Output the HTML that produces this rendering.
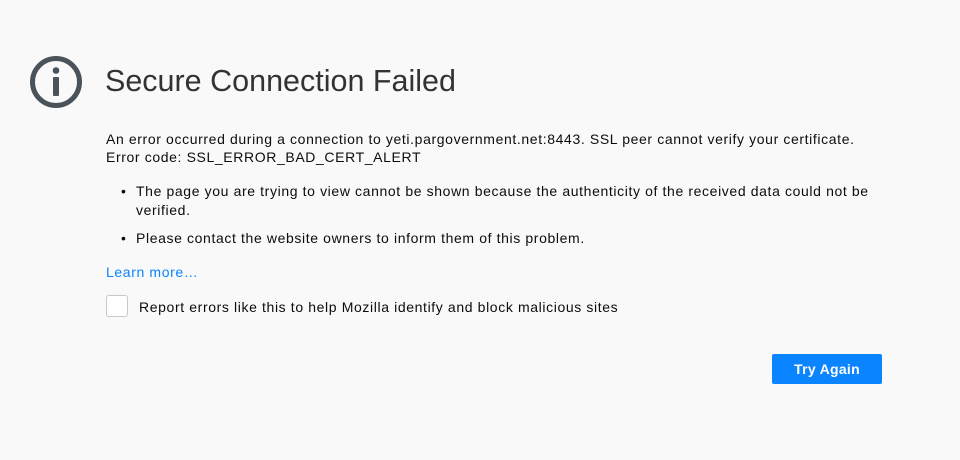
<!DOCTYPE html>
<html><head><style>
body{margin:0;width:960px;height:460px;background:#f9f9fa;font-family:"Liberation Sans",sans-serif;color:#0c0c0d;position:relative;overflow:hidden}
.a{position:absolute;white-space:nowrap}
.t{font-size:14px;line-height:18px;letter-spacing:0.62px}
</style></head><body>
<svg class="a" style="left:28px;top:54px" width="56" height="56" viewBox="0 0 56 56">
<circle cx="28" cy="28" r="23.5" fill="none" stroke="#4a525a" stroke-width="5"/>
<circle cx="28" cy="16.5" r="3.3" fill="#4a525a"/>
<rect x="25" y="23" width="6" height="19" rx="1" fill="#4a525a"/>
</svg>
<div class="a" style="left:105px;top:61px;font-size:30.5px;line-height:40px;color:#333;font-weight:300">Secure Connection Failed</div>
<div class="a t" style="left:106px;top:130px">An error occurred during a connection to yeti.pargovernment.net:8443. SSL peer cannot verify your certificate.</div>
<div class="a t" style="left:106px;top:148px">Error code: SSL_ERROR_BAD_CERT_ALERT</div>
<div class="a t" style="left:121px;top:182px">•</div>
<div class="a t" style="left:136px;top:182px">The page you are trying to view cannot be shown because the authenticity of the received data could not be</div>
<div class="a t" style="left:136px;top:201px">verified.</div>
<div class="a t" style="left:121px;top:229px">•</div>
<div class="a t" style="left:136px;top:229px">Please contact the website owners to inform them of this problem.</div>
<div class="a t" style="left:106px;top:263px;color:#0a84ff">Learn more…</div>
<div class="a" style="left:106px;top:295px;width:20px;height:20px;border:1px solid #c8c8ca;border-radius:3px;background:#fff"></div>
<div class="a t" style="left:139px;top:298px">Report errors like this to help Mozilla identify and block malicious sites</div>
<div class="a" style="left:772px;top:354px;width:110px;height:30px;background:#0a84ff;border-radius:2px;color:#fff;font-size:14px;line-height:30px;text-align:center;font-weight:bold;letter-spacing:0.3px">Try Again</div>
</body></html>
